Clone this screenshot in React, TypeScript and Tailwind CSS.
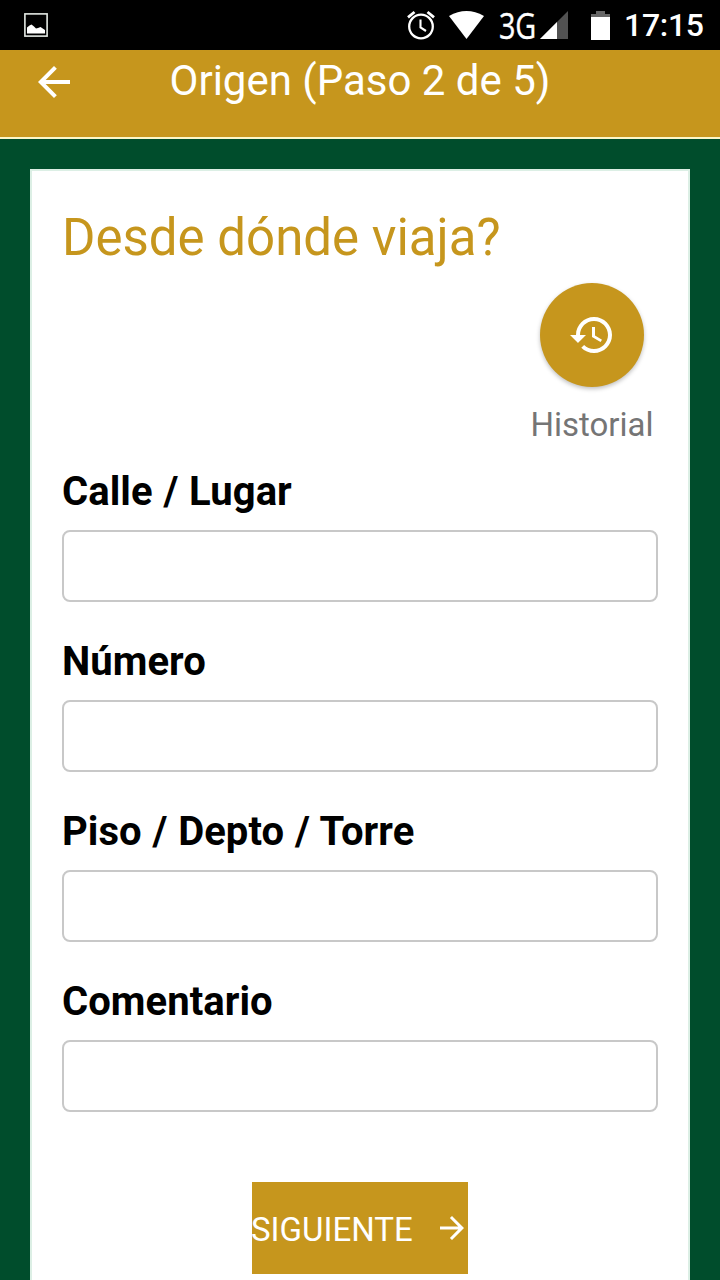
import React from "react";

const fields = ["Calle / Lugar", "Número", "Piso / Depto / Torre", "Comentario"];

function StatusBar() {
  return (
    <div className="flex h-[50px] shrink-0 items-center bg-black pl-6 pr-4 text-white">
      <svg width="24" height="24" viewBox="0 0 24 24" className="block">
        <rect x="0.9" y="0.9" width="22.2" height="22.2" fill="none" stroke="#e4e9e4" strokeWidth="1.6" />
        <path d="M3 20.500v-6L5.500 12.500 7.500 11.500 10 13.500 12 15.500 14 15 16.500 14 21 17v3.500Z" fill="white" />
      </svg>
      <div className="ml-auto flex h-full items-center">
        <svg width="28" height="30" viewBox="0 0 28 30" className="mr-3.5 block" fill="none" stroke="white">
          <circle cx="14" cy="16.500" r="11.800" strokeWidth="2.300" />
          <path d="M1 7.300 7.500 2M27 7.300 20.500 2" strokeWidth="2.800" />
          <path d="M13.500 9.500v8l5.500 3.500" strokeWidth="2.100" />
        </svg>
        <svg width="35" height="28" viewBox="0 0 35 28" className="mr-[15px] block">
          <path d="M0 5Q17.500-5 35 5L17.500 28Z" fill="white" />
        </svg>
        <span className="block w-[41px] origin-left scale-x-[0.8] whitespace-nowrap font-['Open_Sans','Noto_Sans',sans-serif] text-[36px] leading-[51px] tracking-[-0.3px] [-webkit-text-stroke:0.4px_white]">3G</span>
        <svg width="28" height="28" viewBox="0 0 28 28" className="mr-[23px] block">
          <path d="M28 0V28H0Z" fill="#525252" />
          <path d="M17 11V28H0Z" fill="white" />
        </svg>
        <svg width="19" height="29" viewBox="0 0 19 29" className="mr-[14px] block">
          <path d="M5 0h9v3h5v4H0V3h5Z" fill="#666" />
          <path d="M0 6h19v23H0Z" fill="white" />
        </svg>
        <span className="block w-[80px] whitespace-nowrap text-[32px] font-medium leading-[51px] tracking-[-0.3px]">17:15</span>
      </div>
    </div>
  );
}

export default function App() {
  return (
    <div className="flex h-[1280px] w-[720px] flex-col overflow-hidden bg-[#004d2c] font-['Roboto',sans-serif]">
      <StatusBar />
      <header className="grid h-[89px] shrink-0 grid-cols-[78px_1fr_78px] items-start border-b-2 border-[#fbf7c8] bg-[#c6961d] text-white">
        <button aria-label="Volver" className="ml-[30px] mt-2">
          <svg width="48" height="48" viewBox="0 0 24 24" fill="currentColor" className="block">
            <path d="M20 11H7.830l5.590-5.590L12 4l-8 8 8 8 1.410-1.410L7.830 13H20v-2z" />
          </svg>
        </button>
        <h1 className="whitespace-nowrap text-center text-[42px] leading-[62px]">Origen (Paso 2 de 5)</h1>
      </header>
      <main className="mx-[30px] mt-[30px] flex flex-1 flex-col border-2 border-b-0 border-[#dcefe5] bg-white px-[30px]">
        <h2 className="mt-[37px] h-[60px] whitespace-nowrap text-[51px] leading-[60px] text-[#c6961d]">Desde dónde viaja?</h2>
        <div className="mt-[15px] flex w-[132px] flex-col items-center self-end">
          <button aria-label="Historial" className="flex size-[104px] items-center justify-center rounded-full bg-[#c6961d] text-white shadow-[0_2px_4px_rgba(0,0,0,0.25)]">
            <svg width="48" height="48" viewBox="0 0 24 24" fill="currentColor" className="block">
              <path d="M13 3c-4.970 0-9 4.030-9 9H1l3.890 3.890.07.14L9 12H6c0-3.870 3.130-7 7-7s7 3.130 7 7-3.130 7-7 7c-1.930 0-3.680-.79-4.940-2.060l-1.420 1.420C8.270 19.990 10.510 21 13 21c4.970 0 9-4.030 9-9s-4.030-9-9-9zm-1 5v5l4.280 2.540.72-1.210-3.500-2.080V8H12z" />
            </svg>
          </button>
          <span className="mt-[18px] text-[33px] leading-[40px] text-[#757575]">Historial</span>
        </div>
        <form className="mt-[21px] flex flex-col">
          {fields.map((label) => (
            <label key={label} className="flex h-[170px] flex-col">
              <span className="mt-1.5 h-10 whitespace-nowrap text-[40px] font-bold leading-[40px] tracking-[0.05px] text-black [word-spacing:0.8px]">{label}</span>
              <input type="text" className="mt-[18px] h-[72px] w-full rounded-lg border-2 border-[#c8c8c8] bg-white px-4 text-[34px] outline-none" />
            </label>
          ))}
        </form>
        <button className="mt-[36px] flex h-[92px] w-[216px] shrink-0 items-center justify-between self-center bg-[#c6961d] text-white">
          <span className="-ml-px whitespace-nowrap pt-1 text-[33px] leading-[88px]">SIGUIENTE</span>
          <svg width="36" height="36" viewBox="0 0 24 24" fill="currentColor" className="-mr-0.5 block">
            <path d="M12 4l-1.410 1.410L16.170 11H4v2h12.170l-5.580 5.590L12 20l8-8z" />
          </svg>
        </button>
      </main>
    </div>
  );
}
